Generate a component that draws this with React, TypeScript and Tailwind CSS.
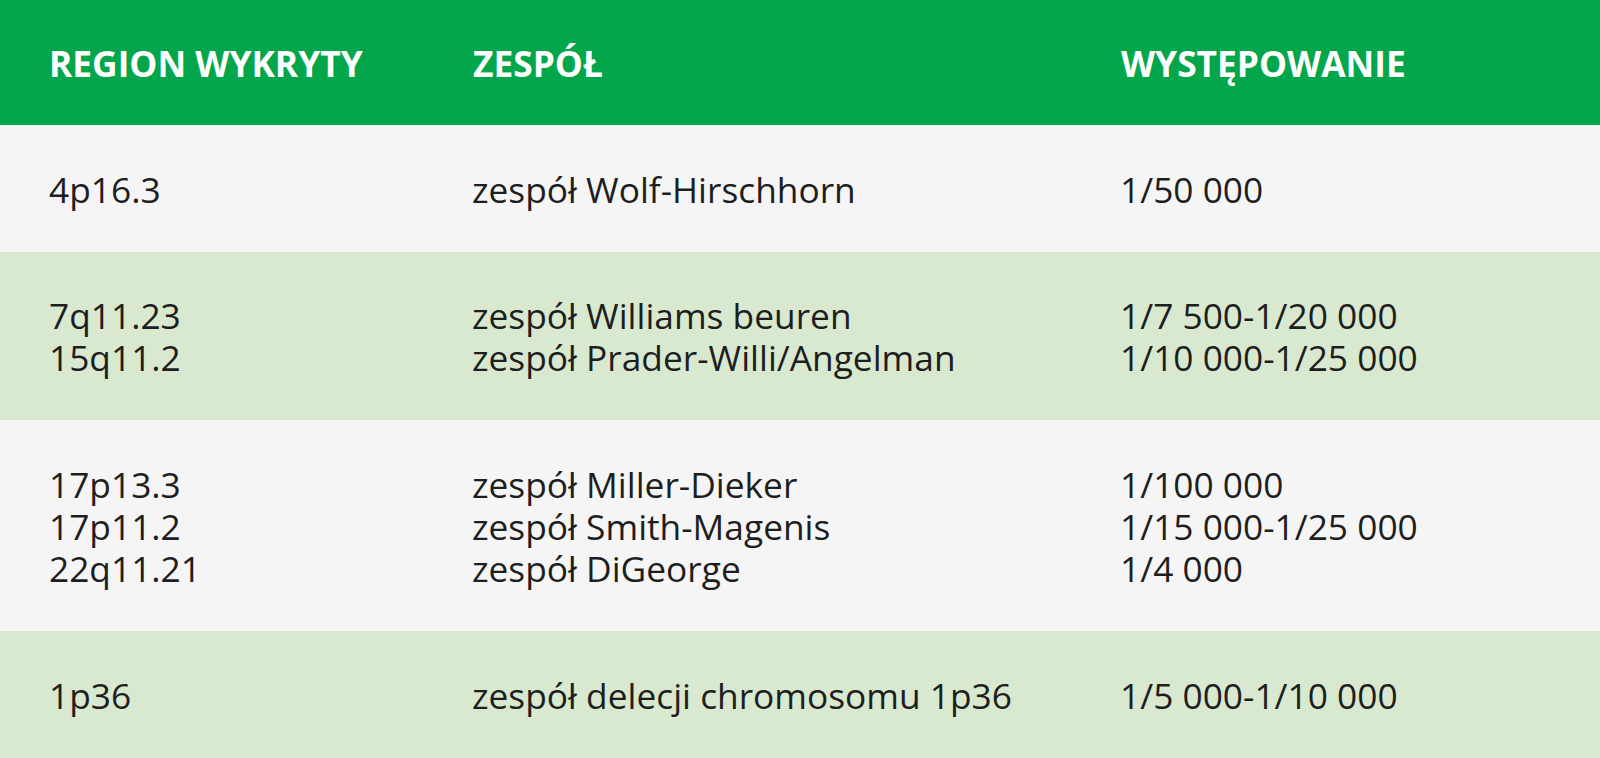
const rows = [
  {
    bg: "bg-[#f5f5f5]",
    pad: "py-[42.5px]",
    items: [["4p16.3", "zespół Wolf-Hirschhorn", "1/50 000"]],
  },
  {
    bg: "bg-[#d8e9d0]",
    pad: "py-[42px]",
    items: [
      ["7q11.23", "zespół Williams beuren", "1/7 500-1/20 000"],
      ["15q11.2", "zespół Prader-Willi/Angelman", "1/10 000-1/25 000"],
    ],
  },
  {
    bg: "bg-[#f5f5f5]",
    pad: "py-[42.5px]",
    items: [
      ["17p13.3", "zespół Miller-Dieker", "1/100 000"],
      ["17p11.2", "zespół Smith-Magenis", "1/15 000-1/25 000"],
      ["22q11.21", "zespół DiGeorge", "1/4 000"],
    ],
  },
  {
    bg: "bg-[#d8e9d0]",
    pad: "py-[42.5px]",
    items: [["1p36", "zespół delecji chromosomu 1p36", "1/5 000-1/10 000"]],
  },
];

export default function App() {
  return (
    <div className="w-[1600px] h-[758px] overflow-hidden font-['Open_Sans',sans-serif] text-[35.3px] leading-[42px] text-[#1e1e1e]">
      {/* header */}
      <div className="grid grid-cols-[424px_648px_1fr] pl-[49px] h-[125px] items-center bg-[#03a64a] text-white font-bold">
        <div>REGION WYKRYTY</div>
        <div>ZESPÓŁ</div>
        <div>WYSTĘPOWANIE</div>
      </div>

      {rows.map((row, i) => (
        <div
          key={i}
          className={`grid grid-cols-[423px_648px_1fr] pl-[49px] ${row.pad} ${row.bg}`}
        >
          <div className="flex flex-col">
            {row.items.map((it) => (
              <span key={it[0]}>{it[0]}</span>
            ))}
          </div>
          <div className="flex flex-col">
            {row.items.map((it) => (
              <span key={it[1]}>{it[1]}</span>
            ))}
          </div>
          <div className="flex flex-col">
            {row.items.map((it) => (
              <span key={it[2]}>{it[2]}</span>
            ))}
          </div>
        </div>
      ))}
    </div>
  );
}
